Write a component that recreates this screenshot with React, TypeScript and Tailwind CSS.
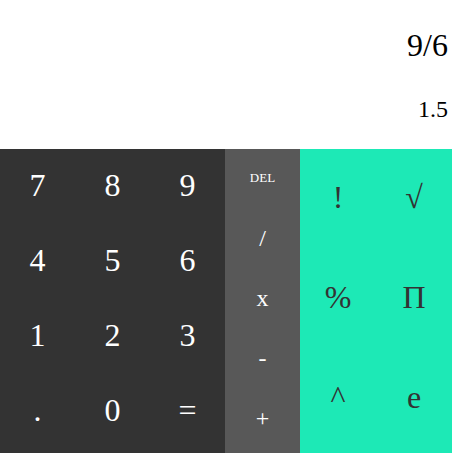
import React from "react";

export default function App() {
  const nums = ["7", "8", "9", "4", "5", "6", "1", "2", "3", ".", "0", "="];
  const ops = ["DEL", "/", "x", "-", "+"];
  const fns = ["!", "√", "%", "Π", "^", "e"];
  return (
    <div
      className="flex h-[453px] w-[452px] flex-col bg-white"
      style={{ fontFamily: '"Liberation Serif", "Times New Roman", serif' }}
    >
      <div className="flex h-[149px] flex-col items-end pr-[4px] text-black">
        <div className="mt-[27px] text-[32px] leading-[37px]">9/6</div>
        <div className="mt-[31px] text-[24px] leading-[28px]">1.5</div>
      </div>
      <div className="flex flex-1">
        <div className="grid w-[225px] grid-cols-3 auto-rows-[75px] content-start bg-[#333333] text-[32px] text-white">
          {nums.map((n) => (
            <div key={n} className="flex items-center justify-center pb-[3px]">
              {n}
            </div>
          ))}
        </div>
        <div className="flex w-[75px] flex-col bg-[#585858] text-white">
          {ops.map((o) => (
            <div
              key={o}
              className={`flex h-[60px] items-center justify-center pb-[3px] ${
                o === "DEL" ? "text-[13px]" : "text-[24px]"
              }`}
            >
              {o}
            </div>
          ))}
        </div>
        <div className="grid flex-1 grid-cols-2 auto-rows-[100px] content-start bg-[#1de9b6] text-[32px] text-[#333333]">
          {fns.map((f) => (
            <div key={f} className="flex items-center justify-center pb-[4px]">
              {f}
            </div>
          ))}
        </div>
      </div>
    </div>
  );
}
